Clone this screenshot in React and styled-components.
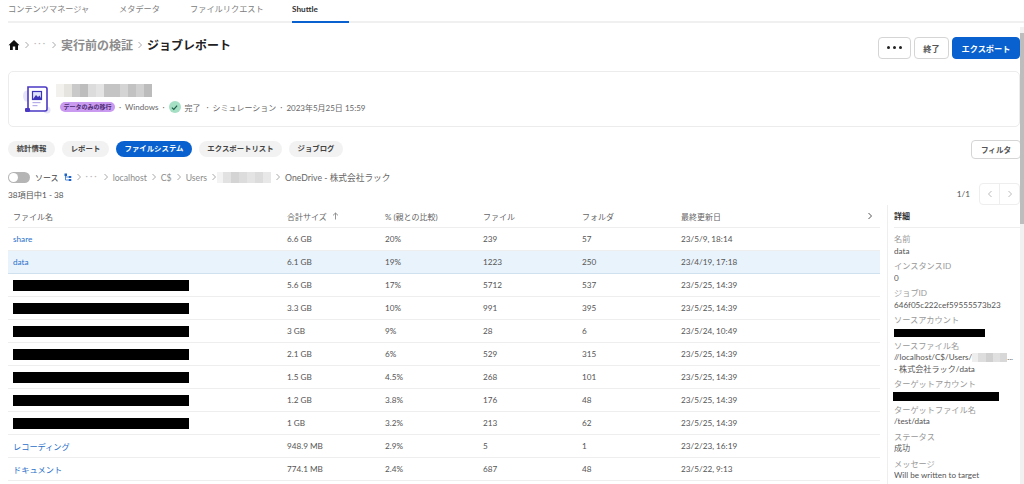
import styled, {createGlobalStyle} from 'styled-components'

const Global = createGlobalStyle`
  html, body {
    margin: 0;
    height: 484px;
    overflow: hidden;
    background: #fff;
  }
  body {
    font-family: Lato, "Noto Sans CJK JP", sans-serif;
    font-size: 8.2px;
    color: #4a4a4a;
  }
`
const Page = styled.div`
  width: 1024px;
  height: 484px;
  overflow: hidden;
  display: flex;
  flex-direction: column;
`
const Tabs = styled.div`
  display: flex;
  align-items: flex-start;
  height: 21px;
  margin-left: 8px;
  border-bottom: 2px solid #f0f0f0;
`
const Tab = styled.div`
  width: ${p => p.$w}px;
  height: 23px;
  line-height: 19px;
  font-size: 8.2px;
  font-weight: ${p => (p.$active ? 700 : 400)};
  color: ${p => (p.$active ? '#333' : '#808080')};
  border-bottom: ${p => (p.$active ? '2px solid #0861ce' : 'none')};
  box-sizing: border-box;
`
const Body = styled.div`
  flex: 1;
  display: flex;
  min-height: 0;
`
const Main = styled.div`
  width: 1012px;
  margin-left: 8px;
  display: flex;
  flex-direction: column;
  min-height: 0;
`
const Scrollbar = styled.div`
  width: 4px;
  margin-top: 4px;
  background: #f1f1f1;
  display: flex;
  flex-direction: column;
`
const Thumb = styled.div`
  height: 191px;
  margin-top: 6px;
  background: #bdbdbd;
`
const Header = styled.div`
  height: 47px;
  display: flex;
  align-items: center;
  justify-content: space-between;
`
const Crumbs = styled.div`
  display: flex;
  align-items: center;
  gap: 3px;
  height: 20px;
  margin-bottom: 4px;
`
const CrumbLink = styled.span`
  font-size: 12px;
  font-weight: 700;
  color: #8c8c8c;
`
const CrumbNow = styled.span`
  font-size: 12px;
  font-weight: 700;
  color: #222;
`
const Ellipsis = styled.span`
  color: #b8b8b8;
  font-size: 9px;
  letter-spacing: 2px;
  transform: translateY(-2px);
  white-space: nowrap;
`
const Actions = styled.div`
  display: flex;
  gap: 3px;
  margin-top: 2px;
`
const Button = styled.button`
  height: 22px;
  width: ${p => p.$w}px;
  padding: 0;
  border-radius: 4px;
  border: 1px solid ${p => (p.$primary ? '#0861ce' : '#d5d5d5')};
  background: ${p => (p.$primary ? '#0861ce' : '#fff')};
  color: ${p => (p.$primary ? '#fff' : '#555')};
  font-family: inherit;
  font-size: 8.2px;
  font-weight: 700;
  display: flex;
  align-items: center;
  justify-content: center;
  gap: 3px;
`
const Dot = styled.span`
  width: 3px;
  height: 3px;
  border-radius: 50%;
  background: #222;
`
const Card = styled.div`
  height: 56px;
  margin-top: 1px;
  border: 1px solid #ececec;
  border-radius: 5px;
  box-sizing: border-box;
  padding-left: 14px;
  display: flex;
  align-items: center;
  gap: 9px;
`
const CardText = styled.div`
  display: flex;
  flex-direction: column;
  gap: 3px;
`
const Mosaic = styled.div`
  display: flex;
  height: ${p => p.$h}px;
  margin-left: ${p => p.$ml || 0}px;
`
const Cell = styled.span`
  width: ${p => p.$w}px;
  background: ${p => p.$c};
`
const Meta = styled.div`
  display: flex;
  align-items: center;
  gap: 4px;
  font-size: 8px;
  color: #666;
  height: 15px;
`
const Badge = styled.span`
  background: #c99af0;
  color: #4b2c73;
  border-radius: 5px;
  font-size: 6px;
  font-weight: 700;
  padding: 0 3.5px;
  height: 10px;
  line-height: 10px;
`
const Check = styled.span`
  width: 12px;
  height: 12px;
  border-radius: 50%;
  background: #a5dfc4;
  display: inline-flex;
  align-items: center;
  justify-content: center;
`
const Done = styled.span`
  margin-right: 2px;
`
const PillRow = styled.div`
  display: flex;
  align-items: center;
  justify-content: space-between;
  margin-top: 12px;
  height: 20px;
`
const Pills = styled.div`
  display: flex;
  gap: 7px;
`
const Pill = styled.div`
  width: ${p => p.$w}px;
  height: 16px;
  line-height: 15px;
  text-align: center;
  border-radius: 8px;
  background: ${p => (p.$active ? '#0861ce' : '#f2f2f2')};
  color: ${p => (p.$active ? '#fff' : '#444')};
  font-size: 7.4px;
  font-weight: 700;
`
const FilterButton = styled.button`
  width: 50px;
  height: 19px;
  padding: 0;
  margin-right: -1px;
  border: 1px solid #d5d5d5;
  border-radius: 4px;
  background: #fff;
  color: #555;
  font-family: inherit;
  font-size: 7.6px;
  font-weight: 700;
`
const SourceRow = styled.div`
  display: flex;
  align-items: center;
  gap: 3px;
  height: 14px;
  margin-top: 11px;
  color: #8c8c8c;
  font-size: 8.7px;
`
const Toggle = styled.span`
  width: 22px;
  height: 11px;
  border-radius: 6px;
  background: #b5b5b5;
  position: relative;
  margin-right: 2px;
`
const Knob = styled.span`
  position: absolute;
  left: 1px;
  top: 1px;
  width: 9px;
  height: 9px;
  border-radius: 50%;
  background: #fff;
`
const SourceLabel = styled.span`
  color: #444;
  font-size: 8px;
  margin-right: 2px;
`
const StrongCrumb = styled.span`
  color: #666;
`
const CountRow = styled.div`
  display: flex;
  align-items: center;
  justify-content: space-between;
  height: 22px;
  margin-top: -1px;
  color: #555;
`
const Pager = styled.div`
  display: flex;
  align-items: center;
  gap: 9px;
`
const PageBox = styled.div`
  width: 41px;
  height: 22px;
  box-sizing: border-box;
  border: 1px solid #eee;
  border-radius: 4px;
  display: flex;
`
const PageArrow = styled.div`
  flex: 1;
  display: flex;
  align-items: center;
  justify-content: center;
  & + & {
    border-left: 1px solid #eee;
  }
`
const Split = styled.div`
  flex: 1;
  display: flex;
  min-height: 0;
`
const Table = styled.div`
  width: 872px;
  flex-shrink: 0;
`
const Row = styled.div`
  display: grid;
  grid-template-columns: 274px 98px 98px 99px 99px 1fr 14px;
  align-items: center;
  height: 23px;
  box-sizing: border-box;
  padding-left: 5px;
  border-bottom: 1px solid ${p => (p.$selected ? '#cfe0ee' : '#eee')};
  background: ${p => (p.$selected ? '#e9f3fb' : 'transparent')};
  color: #555;
  font-size: 8.2px;
`
const HeadRow = styled(Row)`
  color: #666;
  font-size: 8px;
`
const SortCell = styled.span`
  display: flex;
  align-items: center;
  gap: 5px;
`
const NameLink = styled.span`
  color: #2a6fc9;
`
const Redacted = styled.span`
  display: block;
  width: ${p => p.$w}px;
  height: ${p => p.$h}px;
  margin-top: ${p => p.$mt || 0}px;
  margin-bottom: ${p => p.$mb || 0}px;
  margin-left: ${p => p.$ml || 0}px;
  background: #000;
`
const Detail = styled.div`
  width: 133px;
  flex-shrink: 0;
  margin-left: 7px;
  border-left: 1px solid #eee;
  padding-left: 6px;
  box-sizing: border-box;
  min-width: 0;
`
const DetailHead = styled.div`
  height: 23px;
  line-height: 22px;
  box-sizing: border-box;
  border-bottom: 1px solid #eee;
  font-weight: 700;
  color: #333;
  font-size: 8px;
  margin-bottom: 5px;
`
const Field = styled.div`
  margin-bottom: 3px;
`
const Label = styled.div`
  color: #999;
  font-size: 8.2px;
  line-height: 12.5px;
`
const Value = styled.div`
  color: #555;
  font-size: 8.1px;
  line-height: 11.5px;
  white-space: nowrap;
  overflow: hidden;
`
const InlineMosaic = styled(Mosaic)`
  display: inline-flex;
  vertical-align: middle;
`

const blur1 = [[8, '#f2f1ee'], [8, '#e6e4df'], [8, '#c9c9c9'], [8, '#bdbdbd'], [8, '#dcdcdc'], [8, '#e4e4e4'], [16, '#c4c4c4'], [8, '#d4d4d4'], [8, '#c2c2c2'], [8, '#d0d0d0'], [8, '#bcbcbc']]
const blur2 = [[6, '#f3f3f3'], [8, '#e2e2e2'], [8, '#d4d4d4'], [8, '#dcdcdc'], [8, '#e4e4e4'], [8, '#dcdcdc'], [8, '#e8e8e8']]
const blur3 = [[6, '#eeeeee'], [8, '#dddddd'], [7, '#d0d0d0'], [7, '#e0e0e0'], [7, '#d8d8d8']]

const rows = [
  {name: 'share', size: '6.6 GB', pct: '20%', files: '239', folders: '57', date: '23/5/9, 18:14'},
  {name: 'data', size: '6.1 GB', pct: '19%', files: '1223', folders: '250', date: '23/4/19, 17:18', selected: true},
  {size: '5.6 GB', pct: '17%', files: '5712', folders: '537', date: '23/5/25, 14:39'},
  {size: '3.3 GB', pct: '10%', files: '991', folders: '395', date: '23/5/25, 14:39'},
  {size: '3 GB', pct: '9%', files: '28', folders: '6', date: '23/5/24, 10:49'},
  {size: '2.1 GB', pct: '6%', files: '529', folders: '315', date: '23/5/25, 14:39'},
  {size: '1.5 GB', pct: '4.5%', files: '268', folders: '101', date: '23/5/25, 14:39'},
  {size: '1.2 GB', pct: '3.8%', files: '176', folders: '48', date: '23/5/25, 14:39'},
  {size: '1 GB', pct: '3.2%', files: '213', folders: '62', date: '23/5/25, 14:39'},
  {name: 'レコーディング', size: '948.9 MB', pct: '2.9%', files: '5', folders: '1', date: '23/2/23, 16:19'},
  {name: 'ドキュメント', size: '774.1 MB', pct: '2.4%', files: '687', folders: '48', date: '23/5/22, 9:13'},
]

const Blur = ({cells, h, inline, ml}) => {
  const Comp = inline ? InlineMosaic : Mosaic
  return (
    <Comp $h={h} $ml={ml}>
      {cells.map(([w, c], i) => <Cell key={i} $w={w} $c={c}/>)}
    </Comp>
  )
}

const Chevron = ({left, color = '#aaa', size = 8}) => (
  <svg width={size} height={size} viewBox="0 0 8 8" fill="none" stroke={color} strokeWidth="1">
    <path d={left ? 'M5.5 1 L2.5 4 L5.5 7' : 'M2.5 1 L5.5 4 L2.5 7'}/>
  </svg>
)

const DocIcon = () => (
  <svg width="28" height="30" viewBox="0 0 28 30">
    <ellipse cx="3.5" cy="12" rx="3.5" ry="5.5" fill="#e6e4f8"/>
    <circle cx="24" cy="26" r="3.5" fill="#e6e4f8"/>
    <path d="M5 3 h17 a2 2 0 0 1 2 2 v20 a2 2 0 0 1 -2 2 h-15 l-2 -2 z" fill="#fff" stroke="#4a38c4" strokeWidth="1.6"/>
    <rect x="2" y="24" width="5" height="4" rx="1" fill="#4a38c4"/>
    <rect x="9.5" y="7.5" width="9" height="8" fill="#dfe4fb" stroke="#3d34b8" strokeWidth="1.2"/>
    <path d="M10 15 l3 -4 l2 2 l1.5 -1.5 l2 3.5 z" fill="#3d34b8"/>
    <rect x="9.5" y="18" width="8" height="1.2" fill="#b5aee8"/>
    <rect x="9.5" y="21" width="5" height="1.2" fill="#b5aee8"/>
  </svg>
)

const HomeIcon = () => (
  <svg width="12" height="12" viewBox="0 0 12 12">
    <path d="M6 1 L11.5 6.2 H10 V11 H7.2 V7.6 H4.8 V11 H2 V6.2 H0.5 Z" fill="#111"/>
  </svg>
)

const TreeIcon = () => (
  <svg width="8" height="9" viewBox="0 0 8 9">
    <path d="M1.5 2 V7 H5 M1.5 4 H5" fill="none" stroke="#2a6fc9" strokeWidth="0.8"/>
    <rect x="0.5" y="0.5" width="2.5" height="2.5" fill="#1f63c4"/>
    <rect x="4.8" y="3" width="2.5" height="2" fill="#1f63c4"/>
    <rect x="4.8" y="6" width="2.5" height="2" fill="#1f63c4"/>
  </svg>
)

const SortArrow = () => (
  <svg width="7" height="8" viewBox="0 0 7 8" fill="none" stroke="#888" strokeWidth="0.9">
    <path d="M3.5 7.5 V1 M1 3.4 L3.5 1 L6 3.4"/>
  </svg>
)

const App = () => (
  <Page>
    <Global/>
    <Tabs>
      <Tab $w={111}>コンテンツマネージャ</Tab>
      <Tab $w={71}>メタデータ</Tab>
      <Tab $w={102}>ファイルリクエスト</Tab>
      <Tab $w={57} $active>Shuttle</Tab>
    </Tabs>
    <Body>
      <Main>
        <Header>
          <Crumbs>
            <HomeIcon/>
            <Chevron/>
            <Ellipsis>···</Ellipsis>
            <Chevron/>
            <CrumbLink>実行前の検証</CrumbLink>
            <Chevron/>
            <CrumbNow>ジョブレポート</CrumbNow>
          </Crumbs>
          <Actions>
            <Button $w={33}><Dot/><Dot/><Dot/></Button>
            <Button $w={35}>終了</Button>
            <Button $w={68} $primary>エクスポート</Button>
          </Actions>
        </Header>
        <Card>
          <DocIcon/>
          <CardText>
            <Blur cells={blur1} h={13} ml={-4}/>
            <Meta>
              <Badge>データのみの移行</Badge>
              <span>·</span>
              <span>Windows</span>
              <span>·</span>
              <Check>
                <svg width="7" height="7" viewBox="0 0 8 8" fill="none" stroke="#1d5c45" strokeWidth="1.3">
                  <path d="M1 4.2 L3.2 6.2 L7 1.8"/>
                </svg>
              </Check>
              <Done>完了</Done>
              <span>·</span>
              <span>シミュレーション</span>
              <span>·</span>
              <span>2023年5月25日 15:59</span>
            </Meta>
          </CardText>
        </Card>
        <PillRow>
          <Pills>
            <Pill $w={47}>統計情報</Pill>
            <Pill $w={47}>レポート</Pill>
            <Pill $w={76} $active>ファイルシステム</Pill>
            <Pill $w={83}>エクスポートリスト</Pill>
            <Pill $w={54}>ジョブログ</Pill>
          </Pills>
          <FilterButton>フィルタ</FilterButton>
        </PillRow>
        <SourceRow>
          <Toggle><Knob/></Toggle>
          <SourceLabel>ソース</SourceLabel>
          <TreeIcon/>
          <Chevron/>
          <Ellipsis>···</Ellipsis>
          <Chevron/>
          <span>localhost</span>
          <Chevron/>
          <span>C$</span>
          <Chevron/>
          <span>Users</span>
          <Chevron/>
          <Blur cells={blur2} h={11} ml={-4}/>
          <Chevron/>
          <StrongCrumb>OneDrive - 株式会社ラック</StrongCrumb>
        </SourceRow>
        <CountRow>
          <span>38項目中1 - 38</span>
          <Pager>
            <span>1/1</span>
            <PageBox>
              <PageArrow><Chevron left color="#bbb"/></PageArrow>
              <PageArrow><Chevron color="#bbb"/></PageArrow>
            </PageBox>
          </Pager>
        </CountRow>
        <Split>
          <Table>
            <HeadRow>
              <span>ファイル名</span>
              <SortCell>合計サイズ <SortArrow/></SortCell>
              <span>% (親との比較)</span>
              <span>ファイル</span>
              <span>フォルダ</span>
              <span>最終更新日</span>
              <Chevron color="#555"/>
            </HeadRow>
            {rows.map((row, i) => (
              <Row key={i} $selected={row.selected}>
                {row.name ? <NameLink>{row.name}</NameLink> : <Redacted $w={176} $h={11}/>}
                <span>{row.size}</span>
                <span>{row.pct}</span>
                <span>{row.files}</span>
                <span>{row.folders}</span>
                <span>{row.date}</span>
              </Row>
            ))}
          </Table>
          <Detail>
            <DetailHead>詳細</DetailHead>
            <Field><Label>名前</Label><Value>data</Value></Field>
            <Field><Label>インスタンスID</Label><Value>0</Value></Field>
            <Field><Label>ジョブID</Label><Value>646f05c222cef59555573b23</Value></Field>
            <Field><Label>ソースアカウント</Label><Redacted $w={91} $h={8} $mt={2} $mb={1.5}/></Field>
            <Field>
              <Label>ソースファイル名</Label>
              <Value>//localhost/C$/Users/<Blur cells={blur3} h={9} inline/>...</Value>
              <Value>- 株式会社ラック/data</Value>
            </Field>
            <Field><Label>ターゲットアカウント</Label><Redacted $w={106} $h={9} $mt={1} $mb={1.5} $ml={-1}/></Field>
            <Field><Label>ターゲットファイル名</Label><Value>/test/data</Value></Field>
            <Field><Label>ステータス</Label><Value>成功</Value></Field>
            <Field><Label>メッセージ</Label><Value>Will be written to target</Value></Field>
          </Detail>
        </Split>
      </Main>
      <Scrollbar><Thumb/></Scrollbar>
    </Body>
  </Page>
)

export default App
